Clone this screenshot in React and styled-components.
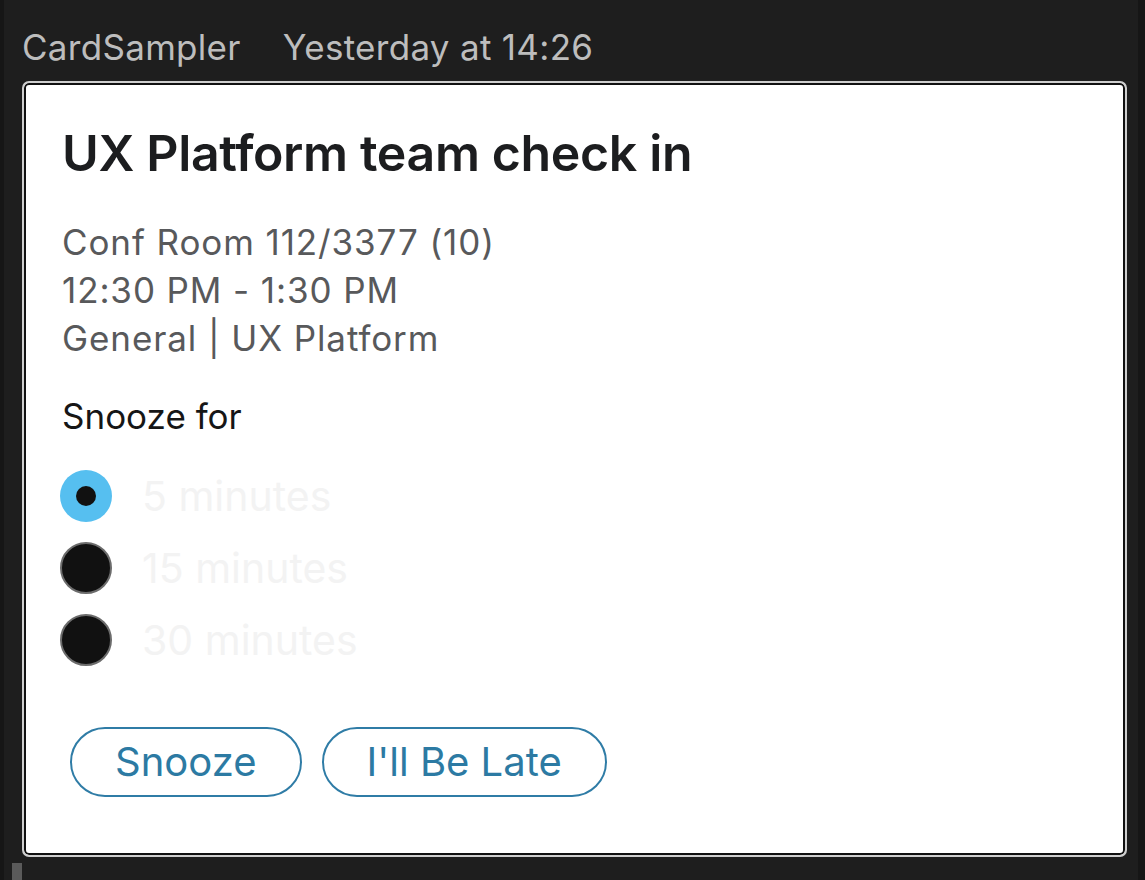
import React, { useState } from 'react';
import styled, { createGlobalStyle } from 'styled-components';

const GlobalStyle = createGlobalStyle`
    html, body {
        margin: 0;
        padding: 0;
        background: #1e1e1e;
    }
    * {
        box-sizing: border-box;
    }
`;

const Page = styled.div`
    width: 1145px;
    height: 880px;
    overflow: hidden;
    background: #1e1e1e;
    border-left: 4px solid #161616;
    border-right: 7px solid #161616;
    padding: 0 11px 0 18px;
    font-family: Inter, 'Liberation Sans', Arial, sans-serif;
`;

const Header = styled.div`
    display: flex;
    align-items: flex-end;
    gap: 42px;
    height: 81px;
    padding-bottom: 16px;
    font-size: 35px;
    letter-spacing: 0.3px;
    color: #bdbdbd;
    line-height: 1;
`;

const Card = styled.div`
    height: 776px;
    border: 2px solid #cfcfcf;
    border-radius: 7px;
    background: #ffffff;
    box-shadow: inset 0 0 0 2px #111111;
    padding: 40px 38px 0 38px;
`;

const Title = styled.h1`
    margin: 0 0 35px;
    font-size: 50px;
    font-weight: 600;
    color: #1c1d1f;
    line-height: 1.2;
    letter-spacing: -0.35px;
`;

const Facts = styled.div`
    display: flex;
    flex-direction: column;
    font-size: 35px;
    line-height: 48px;
    letter-spacing: 0.9px;
    color: #58595b;
`;

const Label = styled.div`
    margin-top: 30px;
    font-size: 35px;
    line-height: 48px;
    color: #161616;
`;

const Choices = styled.div`
    display: flex;
    flex-direction: column;
    gap: 20px;
    margin-top: 30px;
`;

const Choice = styled.label`
    display: flex;
    align-items: center;
    gap: 30px;
    height: 52px;
    cursor: pointer;
    font-size: 41px;
    color: #f3f3f3;
`;

const Dot = styled.span`
    width: 52px;
    height: 52px;
    margin-left: -2px;
    border-radius: 50%;
    flex: none;
    display: flex;
    align-items: center;
    justify-content: center;
    background: ${(p) => (p.$on ? '#56bff0' : '#111111')};
    border: ${(p) => (p.$on ? 'none' : '2px solid #6c6c6c')};

    &::after {
        content: '';
        width: 20px;
        height: 20px;
        border-radius: 50%;
        background: #111111;
        display: ${(p) => (p.$on ? 'block' : 'none')};
    }
`;

const Actions = styled.div`
    display: flex;
    gap: 20px;
    margin-top: 61px;
    padding-left: 8px;
`;

const Pill = styled.button`
    height: 70px;
    padding: 0 43px;
    border: 2px solid #2f7ca6;
    border-radius: 35px;
    background: #ffffff;
    color: #2c7aa3;
    font-family: inherit;
    font-size: 40px;
    line-height: 1;
    cursor: pointer;
`;

const Thumb = styled.div`
    width: 10px;
    height: 17px;
    margin: 6px 0 0 -10px;
    background: #5a5a5a;
`;

const options = ['5 minutes', '15 minutes', '30 minutes'];

const App = () => {
    const [picked, setPicked] = useState(0);
    return (
        <>
            <GlobalStyle />
            <Page>
                <Header>
                    <span>CardSampler</span>
                    <span>Yesterday at 14:26</span>
                </Header>
                <Card>
                    <Title>UX Platform team check in</Title>
                    <Facts>
                        <span>Conf Room 112/3377 (10)</span>
                        <span>12:30 PM - 1:30 PM</span>
                        <span>General | UX Platform</span>
                    </Facts>
                    <Label>Snooze for</Label>
                    <Choices>
                        {options.map((o, i) => (
                            <Choice key={o} onClick={() => setPicked(i)}>
                                <Dot $on={picked === i} />
                                {o}
                            </Choice>
                        ))}
                    </Choices>
                    <Actions>
                        <Pill>Snooze</Pill>
                        <Pill>I'll Be Late</Pill>
                    </Actions>
                </Card>
                <Thumb />
            </Page>
        </>
    );
};

export default App;
